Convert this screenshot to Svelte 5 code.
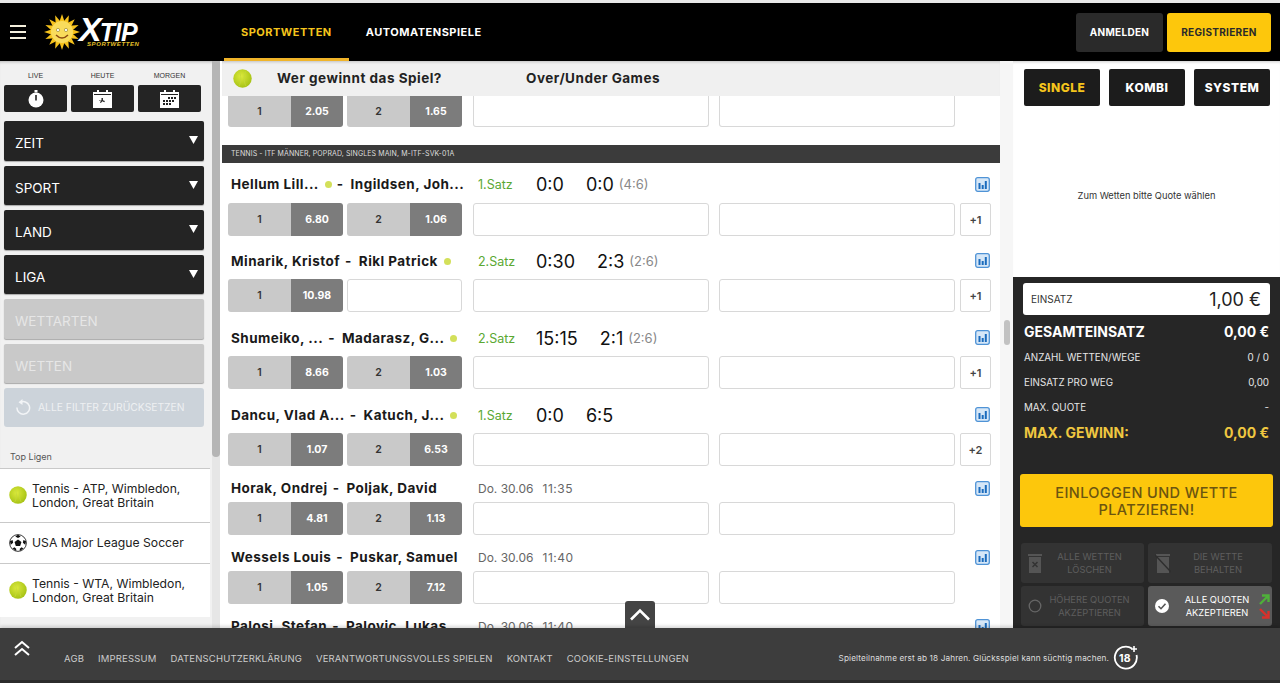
<script>
  const filters = ['ZEIT', 'SPORT', 'LAND', 'LIGA'];
  const leagues = [
    { icon: 'tennis', lines: ['Tennis - ATP, Wimbledon,', 'London, Great Britain'] },
    { icon: 'soccer', lines: ['USA Major League Soccer'] },
    { icon: 'tennis', lines: ['Tennis - WTA, Wimbledon,', 'London, Great Britain'] },
  ];
  const matches = [
    { a: 'Hellum Lill...', b: 'Ingildsen, Joh...', serve: 'a', satz: '1.Satz', p: '0:0', g: '0:0', prev: '(4:6)', o1: '6.80', o2: '1.06', more: '+1' },
    { a: 'Minarik, Kristof', b: 'Rikl Patrick', serve: 'b', satz: '2.Satz', p: '0:30', g: '2:3', prev: '(2:6)', o1: '10.98', o2: null, more: '+1' },
    { a: 'Shumeiko, ...', b: 'Madarasz, G...', serve: 'b', satz: '2.Satz', p: '15:15', g: '2:1', prev: '(2:6)', o1: '8.66', o2: '1.03', more: '+1' },
    { a: 'Dancu, Vlad A...', b: 'Katuch, J...', serve: 'b', satz: '1.Satz', p: '0:0', g: '6:5', prev: '', o1: '1.07', o2: '6.53', more: '+2' },
    { a: 'Horak, Ondrej', b: 'Poljak, David', date: 'Do. 30.06', time: '11:35', o1: '4.81', o2: '1.13' },
    { a: 'Wessels Louis', b: 'Puskar, Samuel', date: 'Do. 30.06', time: '11:40', o1: '1.05', o2: '7.12' },
    { a: 'Palosi, Stefan', b: 'Palovic, Lukas', date: 'Do. 30.06', time: '11:40' },
  ];
  const stats = [
    ['ANZAHL WETTEN/WEGE', '0 / 0'],
    ['EINSATZ PRO WEG', '0,00'],
    ['MAX. QUOTE', '-'],
  ];
  const links = ['AGB', 'IMPRESSUM', 'DATENSCHUTZERKLÄRUNG', 'VERANTWORTUNGSVOLLES SPIELEN', 'KONTAKT', 'COOKIE-EINSTELLUNGEN'];
  const rays = Array.from({ length: 16 }, (_, i) => i * 22.5);
</script>

{#snippet ball(size)}
  <svg class="ball" width={size} height={size} viewBox="0 0 20 20">
    <defs>
      <radialGradient id="tb" cx="42%" cy="38%" r="68%">
        <stop offset="0" stop-color="#dcea3c" />
        <stop offset="1" stop-color="#a2bf12" />
      </radialGradient>
    </defs>
    <circle cx="10" cy="10" r="9.700" fill="url(#tb)" />
    <path d="M6 1.500C9 6 9 14 6 18.500M14 1.500C11 6 11 14 14 18.500" fill="none" stroke="#c4d83c" stroke-width="0.800" />
  </svg>
{/snippet}

{#snippet caret()}
  <svg class="caret" width="9" height="8" viewBox="0 0 9 8"><path d="M0 0h9L4.500 8z" fill="#fff" /></svg>
{/snippet}

{#snippet chart()}
  <svg width="15" height="15" viewBox="0 0 15 15">
    <rect x="0.700" y="0.700" width="13.600" height="13.600" rx="2" fill="#d6e7f7" stroke="#4f93d6" stroke-width="1.300" />
    <path d="M3.500 6h2v6h-2zM6.700 8h2v4h-2zM9.800 4h2v8h-2z" fill="#1a6bbd" />
  </svg>
{/snippet}

<div class="page">
  <header class="top">
    <div class="brand">
      <button class="burger" aria-label="Menü"><span></span><span></span><span></span></button>
      <div class="logo">
        <svg width="38" height="36" viewBox="-19 -18 38 36">
          {#each rays as r}
            <path d="M-3 -9L0 -18L3 -9z" fill="#f6c21c" transform="rotate({r})" />
          {/each}
          <circle r="11" fill="#f9dc5c" />
          <circle cx="-4" cy="-2" r="1.600" fill="#fff" stroke="#8a7a20" stroke-width="0.600" />
          <circle cx="4" cy="-2" r="1.600" fill="#fff" stroke="#8a7a20" stroke-width="0.600" />
          <path d="M-6 3Q0 9 6 3" fill="none" stroke="#8c4a10" stroke-width="1.400" />
        </svg>
        <div class="wordmark">
          <div class="xtip"><span class="big-x">X</span>TIP</div>
          <span class="sub">SPORTWETTEN</span>
        </div>
      </div>
    </div>
    <nav class="mainnav">
      <a class="active" href="#s">SPORTWETTEN</a>
      <a href="#a">AUTOMATENSPIELE</a>
    </nav>
    <div class="auth">
      <button class="login">ANMELDEN</button>
      <button class="register">REGISTRIEREN</button>
    </div>
  </header>

  <div class="body">
    <aside class="side">
      <div class="side-inner">
        <div class="when">
          <div class="when-item">
            <span>LIVE</span>
            <button aria-label="Live">
              <svg width="16" height="18" viewBox="0 0 16 18"><circle cx="8" cy="10" r="7.500" fill="#fff" /><rect x="6.500" y="0" width="3" height="2.400" fill="#fff" /><rect x="7.200" y="5" width="1.600" height="5.500" fill="#222" /></svg>
            </button>
          </div>
          <div class="when-item">
            <span>HEUTE</span>
            <button aria-label="Heute">
              <svg width="19" height="18" viewBox="0 0 19 18"><path d="M0 2h19v16H0z" fill="#fff" /><rect x="1" y="4" width="17" height="1" fill="#222" /><rect x="4" y="0" width="2" height="3.500" fill="#fff" /><rect x="13" y="0" width="2" height="3.500" fill="#fff" /><path d="M6.500 11l2-.8 0-2.200 1.400 0 0 2.200 2 .8-.6 1.200-2-.9-1.400 1.800-1-.8 1.300-1.600-2-.6z" fill="#222" /></svg>
            </button>
          </div>
          <div class="when-item">
            <span>MORGEN</span>
            <button aria-label="Morgen">
              <svg width="19" height="18" viewBox="0 0 19 18"><path d="M0 2h19v16H0z" fill="#fff" /><rect x="1" y="4" width="17" height="1" fill="#222" /><rect x="4" y="0" width="2" height="3.500" fill="#fff" /><rect x="13" y="0" width="2" height="3.500" fill="#fff" /><path d="M8 7h2v2H8zM11 7h2v2h-2zM14 7h2v2h-2zM3 10h2v2H3zM6 10h2v2H6zM9 10h2v2H9zM12 10h2v2h-2zM3 13h2v2H3zM6 13h2v2H6zM9 13h2v2H9z" fill="#222" /></svg>
            </button>
          </div>
        </div>
        <div class="filters">
          {#each filters as f}
            <div class="filter">{f}{@render caret()}</div>
          {/each}
          <div class="filter off">WETTARTEN</div>
          <div class="filter off">WETTEN</div>
          <div class="reset">
            <svg width="16" height="17" viewBox="0 0 16 17"><path d="M5 3.500A6.300 6.300 0 1 1 2 8.500" fill="none" stroke="#f2f4f6" stroke-width="1.500" /><path d="M7.500 0v6L3.500 3.300z" fill="#f2f4f6" /></svg>
            <span>ALLE FILTER ZURÜCKSETZEN</span>
          </div>
        </div>
        <div class="top-title">Top Ligen</div>
        <ul class="leagues">
          {#each leagues as l}
            <li>
              {#if l.icon === 'tennis'}
                {@render ball(18)}
              {:else}
                <svg class="ball" width="18" height="18" viewBox="0 0 20 20">
                  <circle cx="10" cy="10" r="9.300" fill="#fff" stroke="#222" stroke-width="1" />
                  <path d="M10 6l3.800 2.800-1.400 4.400H7.600L6.200 8.800z" fill="#111" />
                  <path d="M10 .8l3 2-3 1.600-3-1.600zM19 8l-1 4-2.600-2.200.6-3zM1 8l1 4 2.600-2.200-.6-3zM4 16l4 3 0-2.600-2-1.800zM16 16l-4 3 0-2.600 2-1.800z" fill="#111" />
                </svg>
              {/if}
              <div class="league-name">
                {#each l.lines as line}<div>{line}</div>{/each}
              </div>
            </li>
          {/each}
        </ul>
      </div>
      <div class="side-scroll"><div class="side-thumb"></div></div>
    </aside>

    <main class="center">
      <div class="tabs">
        {@render ball(19)}
        <span class="tab-one">Wer gewinnt das Spiel?</span>
        <span class="tab-two">Over/Under Games</span>
      </div>
      <div class="list">
        <div class="row-odds partial">
          <div class="odd"><span>1</span><b>2.05</b></div>
          <div class="odd"><span>2</span><b>1.65</b></div>
          <div class="blank"></div>
          <div class="blank"></div>
        </div>
        <div class="band">TENNIS - ITF MÄNNER, POPRAD, SINGLES MAIN, M-ITF-SVK-01A</div>
        {#each matches as m}
          <div class="match" class:live={m.satz}>
            <div class="match-head">
              <div class="names">
                <span>{m.a}</span>
                {#if m.serve === 'a'}<i class="serve"></i>{/if}
                <span class="dash">-</span>
                <span>{m.b}</span>
                {#if m.serve === 'b'}<i class="serve"></i>{/if}
              </div>
              {#if m.satz}
                <span class="satz">{m.satz}</span>
                <span class="point">{m.p}</span>
                <span class="game">{m.g}</span>
                <span class="prev">{m.prev}</span>
              {:else}
                <span class="date">{m.date}</span>
                <span class="time">{m.time}</span>
              {/if}
              <span class="chart">{@render chart()}</span>
            </div>
            {#if m.o1}
              <div class="row-odds">
                <div class="odd"><span>1</span><b>{m.o1}</b></div>
                {#if m.o2}
                  <div class="odd"><span>2</span><b>{m.o2}</b></div>
                {:else}
                  <div class="odd-empty"></div>
                {/if}
                <div class="blank"></div>
                <div class="blank"></div>
                {#if m.more}<div class="more">{m.more}</div>{/if}
              </div>
            {/if}
          </div>
        {/each}
      </div>
      <div class="up-tab">
        <svg width="22" height="13" viewBox="0 0 22 13"><path d="M2 11.500L11 2.500l9 9" fill="none" stroke="#fff" stroke-width="2.600" /></svg>
      </div>
    </main>

    <div class="center-scroll"><div class="center-thumb"></div></div>

    <aside class="slip">
      <div class="slip-top">
        <div class="slip-tabs">
          <button class="on">SINGLE</button>
          <button>KOMBI</button>
          <button>SYSTEM</button>
        </div>
        <p class="hint">Zum Wetten bitte Quote wählen</p>
      </div>
      <div class="slip-panel">
        <div class="stake"><span>EINSATZ</span><strong>1,00 €</strong></div>
        <div class="total"><span>GESAMTEINSATZ</span><span>0,00 €</span></div>
        <div class="stats">
          {#each stats as s}
            <div class="stat"><span>{s[0]}</span><span>{s[1]}</span></div>
          {/each}
        </div>
        <div class="win"><span>MAX. GEWINN:</span><span>0,00 €</span></div>
        <button class="place">EINLOGGEN UND WETTE PLATZIEREN!</button>
        <div class="opts">
          <div class="opt">
            <svg width="14" height="20" viewBox="0 0 14 20"><path d="M0 1h14v2H0zM1 4h12v16H1z" fill="#555" /><path d="M4.500 9l5 5m0-5l-5 5" stroke="#333" stroke-width="1.500" /></svg>
            <span>ALLE WETTEN LÖSCHEN</span>
          </div>
          <div class="opt">
            <svg width="16" height="20" viewBox="0 0 16 20"><path d="M1 1h14v2H1zM2 4h12v16H2z" fill="#555" /><path d="M0 2l16 17" stroke="#2e2e2e" stroke-width="1.500" /></svg>
            <span>DIE WETTE BEHALTEN</span>
          </div>
          <div class="opt">
            <svg width="14" height="14" viewBox="0 0 14 14"><circle cx="7" cy="7" r="5.800" fill="none" stroke="#666" stroke-width="1.300" /></svg>
            <span>HÖHERE QUOTEN AKZEPTIEREN</span>
          </div>
          <div class="opt checked">
            <svg width="14" height="14" viewBox="0 0 14 14"><circle cx="7" cy="7" r="7" fill="#fff" /><path d="M3.500 7.200l2.500 2.500 4.500-5" fill="none" stroke="#555" stroke-width="1.600" /></svg>
            <span>ALLE QUOTEN AKZEPTIEREN</span>
            <div class="arrows">
              <svg width="11" height="11" viewBox="0 0 11 11"><path d="M1 10L9 2M3 1.500h6.500V8" fill="none" stroke="#4fb03a" stroke-width="2.400" /></svg>
              <svg width="11" height="11" viewBox="0 0 11 11"><path d="M1 1l8 8M3 9.500h6.500V3" fill="none" stroke="#d8312c" stroke-width="2.400" /></svg>
            </div>
          </div>
        </div>
      </div>
    </aside>
  </div>

  <footer class="foot">
    <svg class="chev" width="16" height="16" viewBox="0 0 16 16"><path d="M1 8l7-6 7 6M1 15l7-6 7 6" fill="none" stroke="#fff" stroke-width="2" /></svg>
    <nav class="foot-links">
      {#each links as l}<a href="#l">{l}</a>{/each}
    </nav>
    <div class="legal">
      <span>Spielteilnahme erst ab 18 Jahren. Glücksspiel kann süchtig machen.</span>
      <div class="age">
        <svg width="26" height="26" viewBox="0 0 26 26"><path d="M19 3.500A11 11 0 1 0 23.500 10" fill="none" stroke="#fff" stroke-width="1.800" /><path d="M21 1v6M18 4h6" stroke="#fff" stroke-width="1.600" /></svg>
        <b>18</b>
      </div>
    </div>
  </footer>
</div>

<style>
  :global(body) {
    margin: 0;
    background: #fff;
  }

  .page {
    width: 1280px;
    height: 683px;
    overflow: hidden;
    display: flex;
    flex-direction: column;
    font-family: Inter, "Liberation Sans", sans-serif;
    color: #1a1a1a;
    background: #fff;
    border-top: 3px solid #e8e8e8;
    box-sizing: border-box;
  }

  button {
    font-family: inherit;
    border: none;
    cursor: pointer;
  }

  .top {
    height: 58px;
    flex-shrink: 0;
    background: #000;
    display: flex;
    align-items: center;
    position: relative;
    z-index: 3;
  }

  .brand {
    width: 224px;
    display: flex;
    align-items: center;
    flex-shrink: 0;
  }

  .burger {
    margin-left: 10px;
    width: 16px;
    padding: 0;
    background: none;
    display: flex;
    flex-direction: column;
    gap: 4px;
  }

  .burger span {
    display: block;
    height: 2px;
    background: #f4efdc;
  }

  .logo {
    display: flex;
    align-items: center;
    margin-left: 17px;
  }

  .wordmark {
    display: flex;
    flex-direction: column;
    margin-left: -2px;
    font-style: italic;
    font-family: "Liberation Sans", sans-serif;
  }

  .xtip {
    font-size: 25px;
    line-height: 25px;
    height: 24px;
    font-weight: 700;
    color: #fff;
    letter-spacing: -0.5px;
  }

  .big-x {
    font-size: 34px;
    line-height: 25px;
    letter-spacing: -2px;
  }

  .sub {
    font-size: 6px;
    line-height: 7px;
    font-weight: 700;
    letter-spacing: 0.6px;
    color: #e5c02a;
    margin-left: 8px;
  }

  .mainnav {
    display: flex;
    height: 58px;
    flex: 1;
  }

  .mainnav a {
    display: flex;
    align-items: center;
    padding: 2px 17px 0;
    color: #fff;
    font-size: 11px;
    font-weight: 700;
    letter-spacing: 0.5px;
    text-decoration: none;
    box-sizing: border-box;
    border-bottom: 3px solid transparent;
  }

  .mainnav a.active {
    color: #f5c51c;
    border-bottom-color: #f0b429;
  }

  .auth {
    display: flex;
    gap: 4px;
    margin-right: 9px;
  }

  .auth button {
    height: 39px;
    border-radius: 3px;
    font-size: 10px;
    font-weight: 700;
    letter-spacing: 0.3px;
  }

  .login {
    width: 87px;
    background: #2a2a2a;
    color: #fff;
  }

  .register {
    width: 104px;
    background: #fdc70c;
    color: #2a2a2a;
  }

  .body {
    flex: 1;
    min-height: 0;
    display: flex;
    position: relative;
  }

  .side {
    width: 220px;
    flex-shrink: 0;
    display: flex;
    background: #f1f1f1;
    box-shadow: inset 0 3px 3px -2px rgba(0, 0, 0, 0.25);
  }

  .side-inner {
    width: 212px;
    flex-shrink: 0;
    overflow: hidden;
  }

  .when {
    display: flex;
    gap: 4px;
    padding: 11px 0 0 4px;
  }

  .when-item {
    width: 63px;
    display: flex;
    flex-direction: column;
    align-items: center;
    gap: 5px;
  }

  .when-item span {
    font-family: "Liberation Sans", sans-serif;
    font-size: 7px;
    line-height: 8px;
    color: #333;
  }

  .when-item button {
    width: 63px;
    height: 27px;
    background: #242424;
    border-radius: 2px;
    padding: 0;
    display: flex;
    align-items: center;
    justify-content: center;
  }

  .filters {
    display: flex;
    flex-direction: column;
    gap: 5px;
    padding: 9px 8px 0 4px;
  }

  .filter {
    height: 39.500px;
    box-sizing: border-box;
    background: #242424;
    color: #fff;
    border-radius: 2px;
    font-size: 13.500px;
    padding: 14px 0 0 11px;
    position: relative;
    line-height: 16px;
    box-shadow: 0 1px 1px rgba(0, 0, 0, 0.3);
  }

  .caret {
    position: absolute;
    right: 6px;
    top: 15px;
  }

  .filter.off {
    background: #c9c9c9;
    color: #e6e6e6;
  }

  .reset {
    height: 38.500px;
    background: #ccd3da;
    border-radius: 3px;
    display: flex;
    align-items: center;
    padding-left: 11px;
    gap: 7px;
    color: #eef0f2;
    font-size: 10.300px;
  }

  .top-title {
    font-size: 9px;
    color: #555;
    padding: 24px 0 0 10px;
    line-height: 11px;
    height: 17px;
  }

  .leagues {
    list-style: none;
    margin: 0;
    padding: 0;
    width: 210px;
  }

  .leagues li {
    background: #fff;
    border-top: 1px solid #c9c9c9;
    display: flex;
    align-items: center;
    gap: 5px;
    padding-left: 9px;
    min-height: 41px;
    box-sizing: border-box;
    font-size: 12.200px;
    line-height: 14.500px;
    color: #222;
  }

  .league-name {
    padding: 13px 0 11px;
  }

  .ball {
    flex-shrink: 0;
  }

  .side-scroll {
    flex: 1;
    background: #e6e6e6;
  }

  .side-thumb {
    height: 396px;
    background: #b5b5b5;
    border-radius: 0 0 4px 4px;
  }

  .center {
    width: 778px;
    margin-left: 2px;
    flex-shrink: 0;
    position: relative;
    display: flex;
    flex-direction: column;
    min-height: 0;
  }

  .tabs {
    height: 35px;
    box-sizing: border-box;
    padding: 0 0 1px 11px;
    flex-shrink: 0;
    background: #f0f0f0;
    display: flex;
    align-items: center;
    font-size: 13.500px;
    font-weight: 700;
    letter-spacing: 0.5px;
    color: #222;
    box-shadow: inset 0 3px 3px -2px rgba(0, 0, 0, 0.2);
  }

  .tab-one {
    margin-left: 25px;
    width: 249px;
  }

  .list {
    flex: 1;
    overflow: hidden;
    min-height: 0;
  }

  .row-odds {
    display: flex;
    height: 33px;
    padding-left: 6px;
    gap: 4px;
  }

  .row-odds.partial {
    height: 31px;
  }

  .partial .odd,
  .partial .blank {
    height: 31px;
    border-top: none;
    border-radius: 0 0 3px 3px;
  }

  .odd {
    width: 115px;
    height: 33px;
    display: flex;
    border-radius: 3px;
    overflow: hidden;
    font-size: 10.500px;
    font-weight: 600;
    flex-shrink: 0;
  }

  .odd span {
    width: 63px;
    background: #c9c9c9;
    color: #333;
    display: flex;
    align-items: center;
    justify-content: center;
  }

  .odd b {
    flex: 1;
    background: #7c7c7c;
    color: #fff;
    display: flex;
    align-items: center;
    justify-content: center;
    font-weight: 700;
  }

  .odd-empty,
  .blank {
    box-sizing: border-box;
    background: #fff;
    border: 1px solid #d8d8d8;
    border-radius: 3px;
    height: 33px;
    flex-shrink: 0;
  }

  .odd-empty {
    width: 115px;
  }

  .blank {
    width: 236px;
    margin-left: 6px;
  }

  .odd + .blank,
  .odd-empty + .blank {
    margin-left: 7px;
  }

  .more {
    box-sizing: border-box;
    width: 31px;
    height: 33px;
    margin-left: 1px;
    border: 1px solid #d8d8d8;
    border-radius: 2px;
    display: flex;
    align-items: center;
    justify-content: center;
    font-size: 11px;
    font-weight: 600;
    color: #444;
  }

  .band {
    margin-top: 18px;
    height: 18px;
    background: #3b3b3b;
    color: #ddd;
    font-size: 7px;
    line-height: 18px;
    padding-left: 9px;
    letter-spacing: 0.1px;
  }

  .match {
    height: 69px;
  }

  .match.live {
    height: 77px;
  }

  .band + .match.live {
    height: 76px;
  }

  .match-head {
    display: flex;
    align-items: center;
    box-sizing: border-box;
    height: 32px;
    padding: 4px 0 0 9px;
    position: relative;
  }

  .match.live .match-head {
    height: 40px;
    padding-top: 4px;
  }

  .band + .match.live .match-head {
    padding-top: 2px;
  }

  .names {
    width: 247px;
    flex-shrink: 0;
    display: flex;
    align-items: center;
    font-size: 13.500px;
    font-weight: 700;
    letter-spacing: 0.45px;
    white-space: nowrap;
  }

  .dash {
    margin: 0 7px 0 5px;
  }

  .serve {
    width: 7px;
    height: 7px;
    border-radius: 50%;
    background: #d3e05a;
    margin: 0 0 0 6px;
  }

  .satz {
    font-size: 12.500px;
    color: #5aa832;
    width: 58px;
    flex-shrink: 0;
  }

  .point {
    font-size: 18px;
    margin-right: 22px;
    flex-shrink: 0;
    color: #111;
    font-weight: 400;
  }

  .game {
    font-size: 18px;
    color: #111;
    font-weight: 400;
    margin-right: 5px;
  }

  .prev {
    font-size: 13px;
    color: #888;
  }

  .date {
    font-size: 12px;
    color: #666;
    margin-right: 9px;
  }

  .time {
    font-size: 12px;
    color: #666;
    letter-spacing: 0.5px;
  }

  .chart {
    position: absolute;
    left: 753px;
    top: 11px;
    line-height: 0;
  }

  .match.live .chart {
    top: 14px;
  }

  .up-tab {
    position: absolute;
    left: 403px;
    bottom: 0;
    width: 30px;
    height: 27px;
    background: #444;
    border-radius: 3px 3px 0 0;
    display: flex;
    align-items: center;
    justify-content: center;
  }

  .center-scroll {
    width: 13px;
    flex-shrink: 0;
    background: #f6f6f6;
    position: relative;
  }

  .center-thumb {
    position: absolute;
    left: 4px;
    top: 259px;
    width: 6px;
    height: 25px;
    border-radius: 3px;
    background: #c2c2c2;
  }

  .slip {
    flex: 1;
    display: flex;
    flex-direction: column;
    min-width: 0;
  }

  .slip-top {
    height: 216px;
    flex-shrink: 0;
    background: #fff;
    box-shadow: inset 0 3px 3px -2px rgba(0, 0, 0, 0.2);
  }

  .slip-tabs {
    display: flex;
    gap: 9px;
    padding: 8px 10px 0 11px;
  }

  .slip-tabs button {
    flex: 1;
    height: 37px;
    background: #1c1c1c;
    color: #fff;
    border-radius: 2px;
    font-size: 12px;
    font-weight: 800;
    letter-spacing: 0.5px;
    padding: 0;
  }

  .slip-tabs button.on {
    color: #f5c51c;
  }

  .hint {
    margin: 84px 0 0;
    text-align: center;
    font-size: 9.300px;
    color: #333;
  }

  .slip-panel {
    flex: 1;
    min-height: 0;
    background: #262626;
    padding: 6px 10px 0;
    overflow: hidden;
  }

  .stake {
    height: 32px;
    background: #fff;
    border-radius: 3px;
    display: flex;
    align-items: center;
    justify-content: space-between;
    padding: 0 9px 0 8px;
    font-size: 10px;
    color: #333;
  }

  .stake strong {
    font-size: 18px;
    font-weight: 400;
    color: #222;
  }

  .total,
  .win {
    display: flex;
    justify-content: space-between;
    font-weight: 700;
    font-size: 14px;
    line-height: 16px;
    color: #fff;
    padding: 0 1px;
  }

  .total {
    margin-top: 9px;
  }

  .stats {
    display: flex;
    flex-direction: column;
    gap: 14px;
    margin-top: 12px;
  }

  .stat {
    display: flex;
    justify-content: space-between;
    color: #e6e6e6;
    font-size: 9.800px;
    line-height: 11px;
    padding: 0 1px;
  }

  .win {
    color: #efc740;
    margin-top: 12px;
  }

  .place {
    display: block;
    width: 253px;
    height: 53px;
    margin: 33px 0 0 -3px;
    background: #fdc70c;
    color: #6b5510;
    border-radius: 3px;
    font-size: 14.500px;
    font-weight: 500;
    line-height: 17px;
    letter-spacing: 0.4px;
    padding: 0 20px;
  }

  .opts {
    display: grid;
    grid-template-columns: 123px 124px;
    grid-auto-rows: 40px;
    gap: 3px 4px;
    margin: 16px 0 0 -2px;
  }

  .opt {
    background: #333;
    border-radius: 3px;
    display: flex;
    align-items: center;
    padding-left: 7px;
    color: #5e5e5e;
    font-size: 9.300px;
    line-height: 13px;
    text-align: center;
    position: relative;
  }

  .opt span {
    flex: 1;
    padding: 0 12px 0 5px;
  }

  .opt.checked {
    background: #5a5a5a;
    color: #fff;
  }

  .arrows {
    position: absolute;
    right: 2px;
    top: 8px;
    display: flex;
    flex-direction: column;
    gap: 3px;
  }

  .arrows svg {
    display: block;
  }

  .foot {
    height: 55px;
    flex-shrink: 0;
    box-sizing: border-box;
    border-bottom: 3px solid #2b2b2b;
    background: #3d3d3d;
    display: flex;
    align-items: center;
    position: relative;
    z-index: 2;
    color: #ccc;
    box-shadow: 0 -2px 3px rgba(0, 0, 0, 0.15);
  }

  .chev {
    position: absolute;
    left: 14px;
    top: 12px;
  }

  .foot-links {
    display: flex;
    gap: 14px;
    margin-left: 64px;
    font-size: 9.500px;
    padding-top: 8px;
  }

  .foot-links a {
    color: #ccc;
    text-decoration: none;
    letter-spacing: 0.17px;
  }

  .legal {
    margin-left: auto;
    margin-right: 141px;
    display: flex;
    align-items: center;
    gap: 4px;
    font-size: 8.200px;
    letter-spacing: 0.13px;
    padding-top: 8px;
    color: #ddd;
  }

  .age {
    position: relative;
    width: 26px;
    height: 26px;
  }

  .age svg {
    display: block;
  }

  .age b {
    position: absolute;
    left: 6px;
    top: 8px;
    font-size: 10.500px;
    line-height: 12px;
    color: #fff;
  }
</style>
